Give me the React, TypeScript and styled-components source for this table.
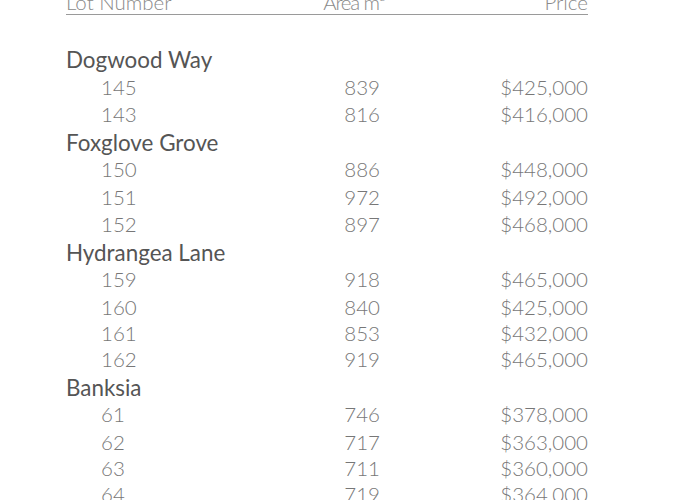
import React from "react";
import styled, { createGlobalStyle } from "styled-components";

const Global = createGlobalStyle`
  html, body { margin: 0; padding: 0; background: #fff; }
  body { font-family: Lato, "Open Sans", sans-serif; }
`;

const Table = styled.div`
  width: 522px;
  margin: -9px 0 0 66px;
  display: grid;
  grid-template-columns: 1fr 100px 208px;
`;

const HeadCell = styled.div<{ $align?: string; $shift?: number; $tightText?: boolean }>`
  font-weight: 300;
  font-size: 20.5px;
  line-height: 22px;
  padding-bottom: 1px;
  color: #8a8a8a;
  text-align: ${(p) => p.$align || "left"};
  margin-right: ${(p) => (p.$shift ? p.$shift : 0)}px;
  border-bottom: 1px solid #9a9a9a;
  margin-bottom: 31px;
  letter-spacing: ${(p) => (p.$tightText ? "-1.2px" : "0")};
  word-spacing: 0;
  sup { font-size: 9px; line-height: 0; vertical-align: 9px; margin-left: 1px; letter-spacing: 0; }
`;

const Street = styled.div`
  grid-column: 1 / -1;
  font-weight: 400;
  font-size: 22.4px;
  line-height: 27.5px;
  color: #555;
`;

const Cell = styled.div<{ $align?: string; $indent?: boolean; $tight?: boolean }>`
  font-weight: 300;
  font-size: 20.5px;
  line-height: ${(p) => (p.$tight ? "25px" : "27.5px")};
  color: #777;
  text-align: ${(p) => p.$align || "left"};
  padding-left: ${(p) => (p.$indent ? "35px" : "0")};
`;

type Lot = [string, string, string, boolean?];
const data: { street: string; lots: Lot[] }[] = [
  { street: "Dogwood Way", lots: [["145", "839", "$425,000"], ["143", "816", "$416,000"]] },
  { street: "Foxglove Grove", lots: [["150", "886", "$448,000"], ["151", "972", "$492,000"], ["152", "897", "$468,000"]] },
  {
    street: "Hydrangea Lane",
    lots: [["159", "918", "$465,000"], ["160", "840", "$425,000"], ["161", "853", "$432,000", true], ["162", "919", "$465,000"]],
  },
  {
    street: "Banksia",
    lots: [["61", "746", "$378,000"], ["62", "717", "$363,000"], ["63", "711", "$360,000", true], ["64", "719", "$364,000"]],
  },
];

export default function App() {
  return (
    <>
      <Global />
      <Table>
        <HeadCell>Lot Number</HeadCell>
        <HeadCell $align="right" $shift={-5} $tightText>
          Area m<sup>2</sup>
        </HeadCell>
        <HeadCell $align="right">Price</HeadCell>
        {data.map((g) => (
          <React.Fragment key={g.street}>
            <Street>{g.street}</Street>
            {g.lots.map(([lot, area, price, tight]) => (
              <React.Fragment key={lot}>
                <Cell $indent $tight={tight}>{lot}</Cell>
                <Cell $align="right" $tight={tight}>{area}</Cell>
                <Cell $align="right" $tight={tight}>{price}</Cell>
              </React.Fragment>
            ))}
          </React.Fragment>
        ))}
      </Table>
    </>
  );
}
